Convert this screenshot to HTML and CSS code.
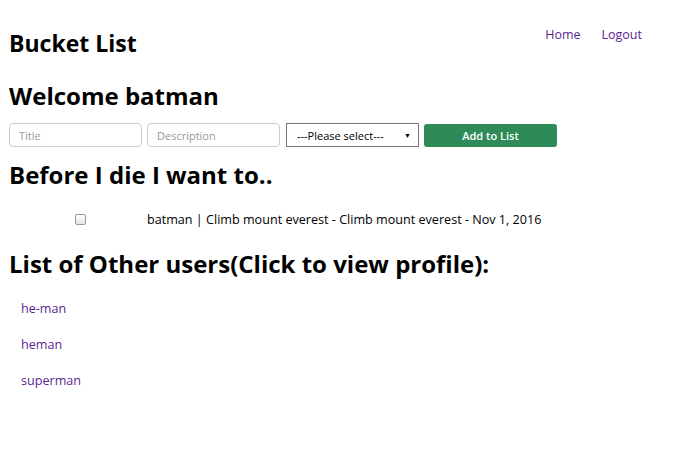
FILE: index.html
```html
<!DOCTYPE html>
<html>
<head>
<meta charset="utf-8">
<link rel="stylesheet" href="styles.css">
</head>
<body>
<header class="top">
  <h1 class="brand">Bucket List</h1>
  <nav class="nav">
    <a href="#" class="nav-link">Home</a>
    <a href="#" class="nav-link">Logout</a>
  </nav>
</header>
<h2 class="welcome">Welcome batman</h2>
<form class="add-form">
  <input class="field" type="text" placeholder="Title">
  <input class="field" type="text" placeholder="Description">
  <div class="select">---Please select---<span class="caret">&#9660;</span></div>
  <button class="add-btn" type="button">Add to List</button>
</form>
<h2 class="section">Before I die I want to..</h2>
<div class="item">
  <span class="check"></span>
  <span class="item-text">batman | Climb mount everest - Climb mount everest - Nov 1, 2016</span>
</div>
<h2 class="section users-title">List of Other users(Click to view profile):</h2>
<ul class="users">
  <li class="user"><a href="#" class="user-link">he-man</a></li>
  <li class="user"><a href="#" class="user-link">heman</a></li>
  <li class="user"><a href="#" class="user-link">superman</a></li>
</ul>
</body>
</html>
```
FILE: styles.css
```css
body {
  margin: 0;
  padding: 0 9px;
  font-family: "Open Sans", "Noto Sans", sans-serif;
  color: #000;
  background: #fff;
}
.top {
  display: flex;
  justify-content: space-between;
  align-items: flex-start;
  padding-top: 26px;
}
.brand {
  margin: 0;
  font-size: 23px;
  line-height: 34px;
  font-weight: 700;
}
.nav {
  display: flex;
  gap: 21px;
  padding-right: 23px;
  padding-top: 1px;
}
.nav-link {
  color: #5a1f8e;
  text-decoration: none;
  font-size: 12.5px;
  line-height: 16px;
}
.welcome, .section {
  margin: 0;
  font-size: 24px;
  font-weight: 700;
  line-height: 34px;
}
.welcome { margin-top: 19px; }
.add-form {
  display: flex;
  gap: 5px;
  margin-top: 10px;
  align-items: center;
}
.field {
  box-sizing: border-box;
  width: 133px;
  height: 24px;
  border: 1px solid #ccc;
  border-radius: 4px;
  padding: 0 9px;
  font-family: inherit;
  font-size: 11px;
}
.field::placeholder { color: #999; }
.select {
  box-sizing: border-box;
  width: 133px;
  height: 24px;
  border: 1px solid #777;
  font-size: 11px;
  display: flex;
  align-items: center;
  justify-content: space-between;
  padding: 0 7px 0 10px;
  margin-left: 1px;
}
.caret { font-size: 7px; }
.add-btn {
  box-sizing: border-box;
  width: 133px;
  height: 23px;
  border: 0;
  border-radius: 3px;
  background: #2e8b57;
  color: #fff;
  font-family: inherit;
  font-size: 11px;
  font-weight: 600;
}
.section { margin-top: 11px; }
.item {
  display: flex;
  align-items: center;
  margin-top: 15px;
  height: 24px;
}
.check {
  box-sizing: border-box;
  width: 11px;
  height: 11px;
  border: 1px solid #999;
  border-radius: 2px;
  background: linear-gradient(#fff, #e6e6e6);
  margin-left: 66px;
}
.item-text {
  margin-left: 61px;
  font-size: 12.6px;
}
.users-title { margin-top: 16px; }
.users {
  list-style: none;
  margin: 19px 0 0;
  padding: 0 0 0 12px;
  font-size: 12.6px;
}
.user {
  display: block;
  height: 18px;
  line-height: 18px;
  margin-bottom: 18px;
}
.user-link {
  color: #5a1f8e;
  text-decoration: none;
}
```
